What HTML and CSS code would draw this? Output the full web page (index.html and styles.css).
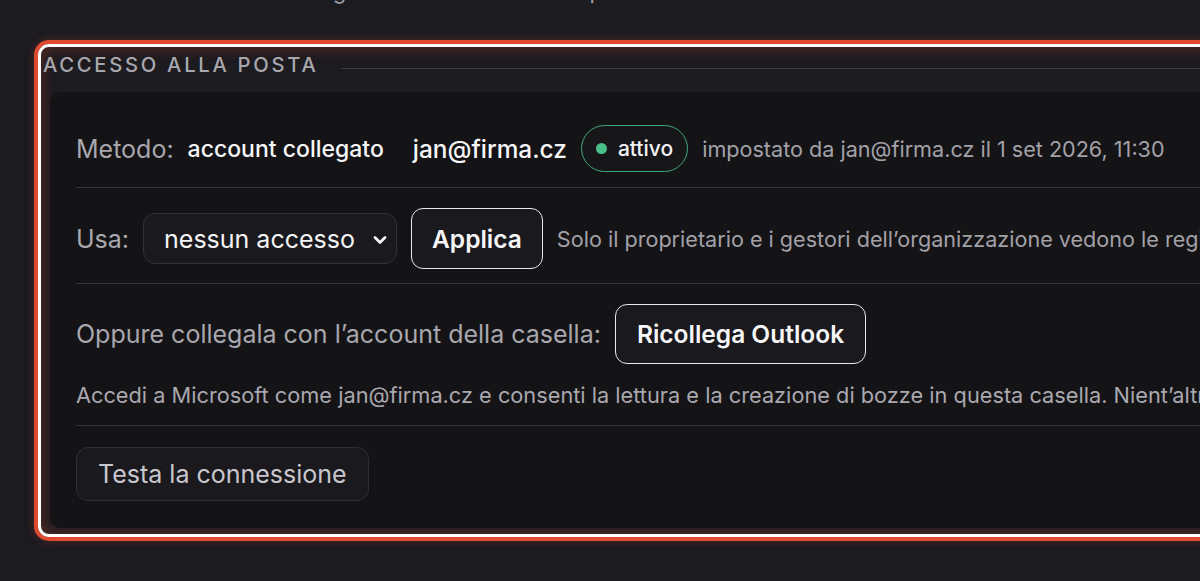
FILE: index.html
```html
<!DOCTYPE html>
<html lang="it">
<head>
<meta charset="utf-8">
<title>Accesso alla posta</title>
<link rel="stylesheet" href="styles.css">
</head>
<body>
<div class="intro"><p>Decidi come l’assistente gestisce bozze nella tua posta.</p></div>
<section class="mail-access">
  <div class="section-head">
    <h2>Accesso alla posta</h2>
    <span class="rule"></span>
  </div>
  <div class="card">
    <div class="row row-method">
      <span class="label">Metodo:</span>
      <strong class="value">account collegato</strong>
      <span class="value email">jan@firma.cz</span>
      <span class="badge"><span class="dot"></span>attivo</span>
      <span class="meta">impostato da jan@firma.cz il 1 set 2026, 11:30</span>
    </div>
    <div class="row row-use">
      <span class="label">Usa:</span>
      <div class="select">
        <span>nessun accesso</span>
        <svg class="chevron" viewBox="0 0 14 10" width="14" height="10"><path d="M2 2.5 L7 7.5 L12 2.5" fill="none" stroke="#f2f2f4" stroke-width="2.8" stroke-linecap="round" stroke-linejoin="round"/></svg>
      </div>
      <button class="btn btn-primary">Applica</button>
      <span class="meta">Solo il proprietario e i gestori dell’organizzazione vedono le registrazioni di accesso.</span>
    </div>
    <div class="row row-link">
      <div class="line">
        <span class="label">Oppure collegala con l’account della casella:</span>
        <button class="btn btn-primary btn-tall">Ricollega Outlook</button>
      </div>
      <p class="desc">Accedi a Microsoft come jan@firma.cz e consenti la lettura e la creazione di bozze in questa casella. Nient’altro.</p>
    </div>
    <div class="row row-test">
      <button class="btn btn-ghost">Testa la connessione</button>
    </div>
  </div>
</section>
</body>
</html>
```

FILE: styles.css
```css
* { box-sizing: border-box; }

html, body {
  margin: 0;
  height: 100%;
  overflow: hidden;
}

body {
  background: #1c1b20;
  font-family: Inter, "Noto Sans", sans-serif;
  color: #f2f2f4;
  white-space: nowrap;
}

.intro {
  height: 7px;
  overflow: hidden;
  padding-left: 76px;
}

.intro p {
  margin: -23px 0 0;
  font-size: 22px;
  line-height: 28px;
  color: #9d9ba2;
}

.mail-access {
  margin: 37px -60px 0 38px;
  height: 493px;
  border: 3px solid #ffffff;
  border-radius: 11px;
  box-shadow: 0 0 0 4px #e04a30, 0 0 10px 4px rgba(224, 74, 48, 0.25), inset 0 0 14px 2px rgba(224, 74, 48, 0.28);
  padding: 0 0 0 2px;
}

.section-head {
  display: flex;
  align-items: center;
  gap: 23px;
  height: 34px;
}

.section-head h2 {
  margin: 0;
  font-size: 20.2px;
  font-weight: 500;
  letter-spacing: 0.135em;
  text-transform: uppercase;
  color: #a9a7ae;
}

.rule {
  flex: 1;
  height: 1px;
  margin-top: 9px;
  background: #3a3940;
}

.card {
  margin: 11px 0 0 7px;
  background: #141316;
  border-radius: 10px;
  padding: 18px 26px 0 26px;
  height: 436px;
}

.row {
  display: flex;
  align-items: center;
  gap: 14px;
  border-bottom: 1px solid #36353b;
}

.row > *, .line > * { flex-shrink: 0; }

.row-method { padding: 15px 0; }
.row-use { padding: 20px 0 14px; gap: 14px; }
.row-link { display: block; padding: 20px 0 18px; }
.row-test { border-bottom: none; padding: 21px 0 0; }

.label {
  font-size: 25px;
  color: #a9a7ae;
}

.value {
  font-size: 23px;
  font-weight: 500;
  color: #f6f6f8;
}

.email {
  font-size: 24.4px;
  margin-left: 15px;
}

.badge {
  display: inline-flex;
  align-items: center;
  gap: 11px;
  height: 47px;
  padding: 0 14px;
  border: 1.5px solid #3fa87b;
  border-radius: 24px;
  background: #17171a;
  font-size: 21px;
  font-weight: 500;
  color: #f2f2f4;
}

.dot {
  width: 11px;
  height: 11px;
  border-radius: 50%;
  background: #4bbf8a;
}

.meta {
  font-size: 21.6px;
  color: #a3a1a8;
}

.select {
  display: flex;
  align-items: center;
  justify-content: space-between;
  width: 254px;
  height: 51px;
  padding: 0 9px 0 20px;
  background: #1a191d;
  border: 1px solid #333238;
  border-radius: 12px;
  font-size: 25px;
  color: #f4f4f6;
}

.chevron { margin-top: 2px; }

.btn {
  font-family: inherit;
  cursor: pointer;
  border-radius: 12px;
  white-space: nowrap;
}

.btn-primary {
  height: 61px;
  padding: 0 20px;
  background: #1a191d;
  border: 1.5px solid #e8e8ea;
  font-size: 24.5px;
  font-weight: 600;
  color: #f6f6f8;
}

.btn-tall { height: 60px; padding: 0 21px; }

.line {
  display: flex;
  align-items: center;
  gap: 14px;
}

.desc {
  margin: 19px 0 0;
  font-size: 21.75px;
  line-height: 24px;
  color: #aaa8af;
}

.btn-ghost {
  height: 54px;
  padding: 0 21px;
  background: #1a191d;
  border: 1px solid #302f35;
  font-size: 25px;
  font-weight: 400;
  color: #c9c7cd;
}
```
